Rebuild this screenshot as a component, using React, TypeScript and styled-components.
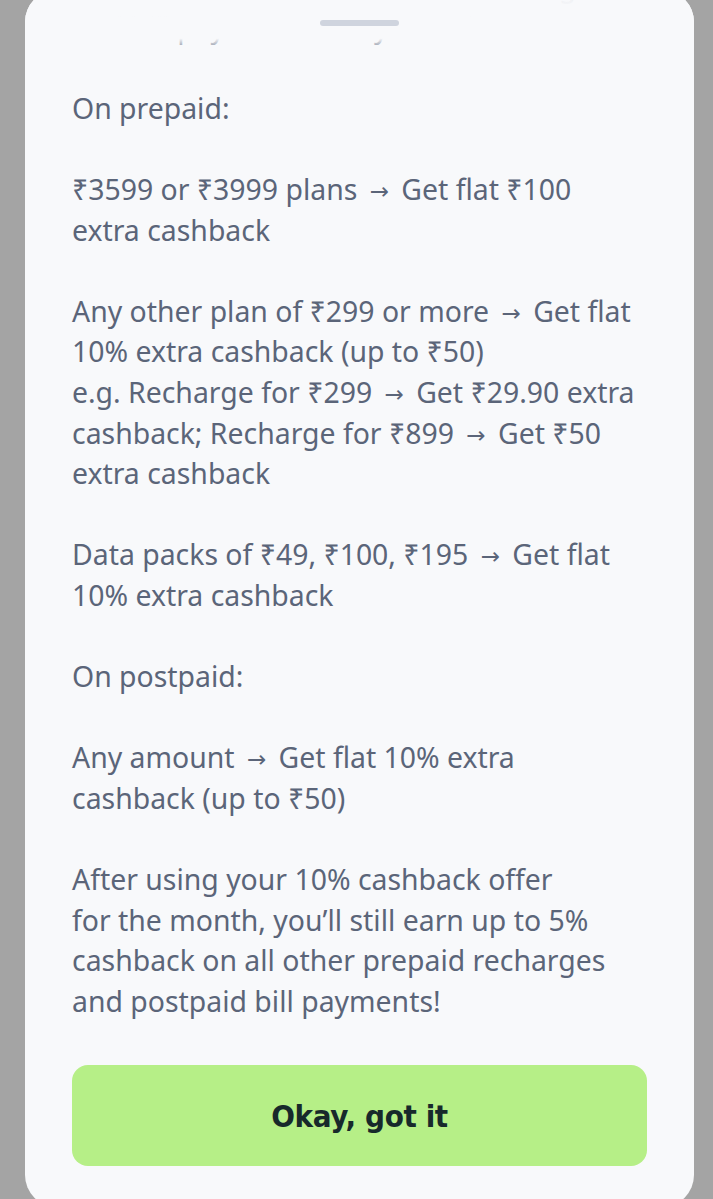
import React from 'react'
import styled, { createGlobalStyle } from 'styled-components'

const GlobalStyle = createGlobalStyle`
  html, body {
    margin: 0;
    padding: 0;
    background: #a4a4a4;
    height: 1199px;
    overflow: hidden;
  }
  body {
    font-family: "Noto Sans", "DejaVu Sans", sans-serif;
  }
`

const Sheet = styled.div`
  position: relative;
  margin: -10px 0 0 25px;
  width: 669px;
  height: 1217px;
  background: #f8f9fb;
  border-radius: 32px;
  overflow: hidden;
  box-sizing: border-box;
  padding: 0 47px;
  display: flex;
  flex-direction: column;
`

const Handle = styled.div`
  position: absolute;
  top: 30px;
  left: 295px;
  width: 79px;
  height: 6px;
  border-radius: 3px;
  background: #cfd4de;
  z-index: 2;
`

/* scrolled-away text fades out under the handle */
const Fade = styled.div`
  position: absolute;
  top: 0;
  left: 0;
  right: 0;
  height: 62px;
  background: linear-gradient(
    rgba(248, 249, 251, 0.9) 0%,
    rgba(248, 249, 251, 0.98) 25%,
    #f8f9fb 45%,
    #f8f9fb 78%,
    rgba(248, 249, 251, 0) 100%
  );
  z-index: 1;
`

const Body = styled.div`
  margin-top: -24px;
  width: 570px;
  color: #5b6579;
  font-size: 28.4px;
  line-height: 40.6px;
`

const Para = styled.p`
  margin: 0 0 40.6px;
  &:last-child {
    margin-bottom: 0;
  }
`

const Arrow = styled.span`
  font-size: 23px;
  line-height: 16px;
  margin: 0 5px;
  vertical-align: 1px;
`

const Button = styled.button`
  margin-top: 44px;
  height: 101px;
  width: 100%;
  flex-shrink: 0;
  border: none;
  border-radius: 16px;
  background: #b6ef87;
  color: #17292b;
  font-family: "DejaVu Sans Condensed", "DejaVu Sans", sans-serif;
  font-stretch: condensed;
  font-weight: 700;
  font-size: 31px;
  letter-spacing: -0.4px;
  padding: 0;
  cursor: pointer;
`

const A = () => <Arrow>→</Arrow>

export default function App() {
  return (
    <>
      <GlobalStyle />
      <Sheet>
        <Fade />
        <Handle />
        <Body>
          <Para>
            Get extra cashback on mobile recharges and bill payments every month
          </Para>
          <Para>On prepaid:</Para>
          <Para>
            ₹3599 or ₹3999 plans <A /> Get flat ₹100 extra cashback
          </Para>
          <Para>
            Any other plan of ₹299 or more <A /> Get flat 10% extra cashback (up to ₹50)
            <br />
            e.g. Recharge for ₹299 <A /> Get ₹29.90 extra cashback; Recharge for ₹899 <A /> Get ₹50
            extra cashback
          </Para>
          <Para>
            Data packs of ₹49, ₹100, ₹195 <A /> Get flat 10% extra cashback
          </Para>
          <Para>On postpaid:</Para>
          <Para>
            Any amount <A /> Get flat 10% extra cashback (up to ₹50)
          </Para>
          <Para>
            After using your 10% cashback offer
            <br />
            for the month, you’ll still earn up to 5% cashback on all other prepaid recharges
            and postpaid bill payments!
          </Para>
        </Body>
        <Button>Okay, got it</Button>
      </Sheet>
    </>
  )
}
